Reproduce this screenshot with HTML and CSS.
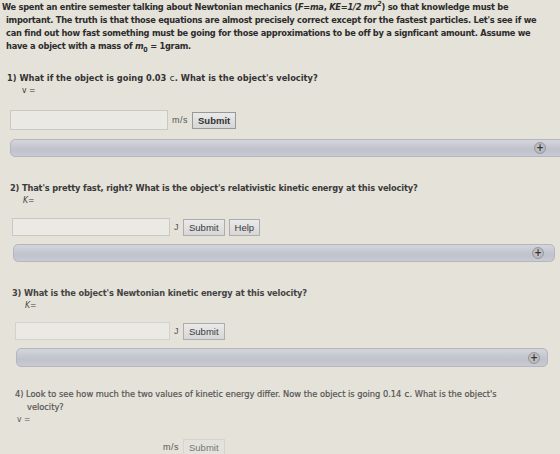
FILE: index.html
```html
<!DOCTYPE html>
<html lang="en">
<head>
    <meta charset="UTF-8">
    <meta name="viewport" content="width=device-width, initial-scale=1.0">
    <title>Relativistic Kinetic Energy</title>
    <link rel="stylesheet" href="styles.css">
</head>
<body>

<div class="intro">
    We spent an entire semester talking about Newtonian mechanics (<i>F=ma</i>, <i>KE=1/2 mv<sup>2</sup></i>) so that knowledge must be<br>
    <span class="indent">important. The truth is that those equations are almost precisely correct except for the fastest particles. Let's see if we</span><br>
    <span class="indent">can find out how fast something must be going for those approximations to be off by a signficant amount. Assume we</span><br>
    <span class="indent">have a object with a mass of <i>m</i><sub>0</sub> = 1gram.</span>
</div>

<section class="question q1">
    <p class="prompt">1) What if the object is going 0.03 <span class="mono">c</span>. What is the object's velocity?</p>
    <p class="var">v =</p>
    <div class="answer">
        <span class="field"></span>
        <span class="unit">m/s</span>
        <button class="btn strong">Submit</button>
    </div>
    <div class="bar"><span class="plus">+</span></div>
</section>

<section class="question q2">
    <p class="prompt">2) That's pretty fast, right? What is the object's relativistic kinetic energy at this velocity?</p>
    <p class="var"><i>K</i>=</p>
    <div class="answer">
        <span class="field"></span>
        <span class="unit">J</span>
        <button class="btn">Submit</button>
        <button class="btn">Help</button>
    </div>
    <div class="bar"><span class="plus">+</span></div>
</section>

<section class="question q3">
    <p class="prompt">3) What is the object's Newtonian kinetic energy at this velocity?</p>
    <p class="var"><i>K</i>=</p>
    <div class="answer">
        <span class="field"></span>
        <span class="unit">J</span>
        <button class="btn">Submit</button>
    </div>
    <div class="bar"><span class="plus">+</span></div>
</section>

<section class="question q4">
    <p class="prompt">4) Look to see how much the two values of kinetic energy differ. Now the object is going 0.14 <span class="mono">c</span>. What is the object's</p>
    <p class="prompt wrap">velocity?</p>
    <p class="var">v =</p>
    <div class="answer">
        <span class="field faint"></span>
        <span class="unit">m/s</span>
        <button class="btn faint">Submit</button>
    </div>
</section>

</body>
</html>
```

FILE: styles.css
```css
body {
    margin: 0;
    padding: 0;
    background-color: #e5e2d9;
    font-family: "DejaVu Sans Condensed", "DejaVu Sans", sans-serif;
    color: #333;
    overflow: hidden;
}

.intro {
    padding: 0 4px 0 2px;
    font-size: 9.2px;
    font-weight: bold;
    letter-spacing: -0.25px;
    line-height: 13px;
    color: #2c2c2c;
    white-space: nowrap;
}

.intro .indent {
    padding-left: 4px;
}

.intro sup,
.intro sub {
    font-size: 7px;
    line-height: 0;
}

p {
    margin: 0;
}

.question .prompt {
    font-size: 9.2px;
    font-weight: bold;
    line-height: 13px;
    white-space: nowrap;
}

.question .prompt.wrap {
    padding-left: 12px;
}

.question .var {
    font-size: 8.5px;
    line-height: 13px;
    padding-left: 15px;
}

.mono {
    font-family: "DejaVu Sans Mono", monospace;
    font-weight: normal;
}

.answer {
    display: flex;
    align-items: center;
    gap: 4px;
    font-family: "Liberation Sans", Arial, sans-serif;
}

.field {
    display: block;
    width: 156px;
    height: 18px;
    border: 1px solid #c9c8c2;
    background-color: #ebe9e3;
}

.field.faint {
    border-color: transparent;
    background-color: transparent;
}

.unit {
    font-size: 9px;
    color: #555;
    letter-spacing: 0.5px;
}

.btn {
    height: 17px;
    padding: 0 5px;
    border: 1px solid #adadad;
    background: linear-gradient(#eaeaea, #d6d6d6);
    font-family: "Liberation Sans", Arial, sans-serif;
    font-size: 9.5px;
    color: #3a3a3a;
}

.btn.strong {
    font-weight: bold;
    border-color: #999;
    color: #333;
}

.btn.faint {
    border-color: #d6d4cd;
    background: #e4e2dc;
    color: #777;
}

.bar {
    display: flex;
    justify-content: flex-end;
    align-items: center;
    height: 18px;
    border: 1px solid #b5b6be;
    border-radius: 5px;
    background: linear-gradient(#d4d5dc, #c0c2cc 60%, #c9cad2);
    box-sizing: border-box;
}

.plus {
    display: flex;
    align-items: center;
    justify-content: center;
    width: 12px;
    height: 12px;
    border-radius: 50%;
    border: 1px solid #999;
    background: radial-gradient(#d0d0d4, #a9aab0);
    color: #333;
    font-size: 10px;
    font-weight: bold;
    line-height: 1;
    box-sizing: border-box;
}

/* question 1 */
.q1 {
    margin-top: 19px;
    padding-left: 7px;
}

.q1 .var {
    padding-left: 15px;
}

.q1 .answer {
    margin: 13px 0 0 3px;
}

.q1 .bar {
    margin: 9px -10px 0 3px;
    padding-right: 23px;
}

/* question 2 */
.q2 {
    margin-top: 24px;
    padding-left: 10px;
    color: #3a3a3a;
}

.q2 .prompt,
.q3 .prompt {
    letter-spacing: -0.15px;
}

.q2 .var {
    padding-left: 13px;
}

.q2 .answer {
    margin: 11px 0 0 2px;
}

.q2 .field {
    height: 16px;
}

.q2 .bar {
    margin: 8px 5px 0 3px;
    padding-right: 10px;
}

/* question 3 */
.q3 {
    margin-top: 24px;
    padding-left: 12px;
    color: #444;
}

.q3 .var {
    padding-left: 13px;
}

.q3 .answer {
    margin: 10px 0 0 3px;
}

.q3 .field {
    width: 153px;
    height: 16px;
    border-color: #d2d1cb;
}

.q3 .bar {
    margin: 8px 12px 0 4px;
    padding-right: 7px;
    height: 19px;
}

/* question 4 */
.q4 {
    margin-top: 20px;
    padding-left: 15px;
    color: #555;
}

.q4 .prompt {
    font-weight: normal;
    -webkit-text-stroke: 0.2px #555;
}

.q4 .var {
    padding-left: 2px;
}

.q4 .answer {
    margin-top: 11px;
}

.q4 .field {
    width: 142px;
}
```
